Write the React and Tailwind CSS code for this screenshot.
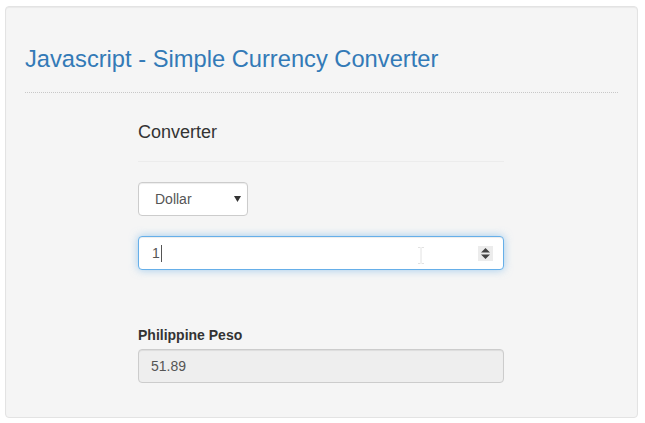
export default function App() {
  return (
    <div className="min-h-screen bg-white pt-[6px] font-['Liberation_Sans',Arial,sans-serif] text-[#333]">
      <div className="ml-[5px] w-[633px] rounded-[4px] border border-[#e3e3e3] bg-[#f5f5f5] px-[19px] pb-[34px] pt-[39px] shadow-[inset_0_1px_1px_rgba(0,0,0,0.05)]">
        <h3 className="text-[23.7px] leading-[26px] text-[#337ab7]">
          Javascript - Simple Currency Converter
        </h3>
        <div className="mt-[20px] border-t border-dotted border-[#c8c8c8]" />

        <div className="ml-[113px] w-[366px]">
          <div className="mt-[29px] text-[18px] leading-[20px]">Converter</div>
          <div className="mt-[19px] h-px bg-[#ececec]" />

          {/* currency select */}
          <div className="mt-[20px] flex h-[34px] w-[110px] items-center justify-between rounded-[4px] border border-[#ccc] bg-white pl-[16px] pr-[6px] text-[14px] text-[#555] shadow-[inset_0_1px_1px_rgba(0,0,0,0.075)]">
            <span>Dollar</span>
            <svg width="7" height="6" viewBox="0 0 7 6">
              <path d="M0 0h7L3.5 6z" fill="#333" />
            </svg>
          </div>

          {/* amount input (focused) */}
          <div className="relative mt-[20px] flex h-[34px] items-center rounded-[4px] border border-[#66afe9] bg-white pl-[13px] pr-[10px] text-[14px] text-[#555] shadow-[inset_0_1px_1px_rgba(0,0,0,0.075),0_0_8px_rgba(102,175,233,0.6)]">
            <span>1</span>
            <span className="ml-px h-[17px] w-px bg-[#555]" />
            <svg className="absolute left-[279px] top-[10px]" width="6" height="17" viewBox="0 0 6 17">
              <path d="M0 0.5h2.5M3.5 0.5h2.5M3 1v15M0 16.5h2.5M3.5 16.5h2.5" stroke="#e2e2e2" strokeWidth="1" fill="none" />
            </svg>
            <div className="ml-auto flex h-[15px] w-[15px] items-center justify-center bg-[#ececec]">
              <svg width="9" height="11" viewBox="0 0 9 11">
                <path d="M4.5 0L9 4.5H0z M0 6.5h9L4.5 11z" fill="#444" />
              </svg>
            </div>
          </div>

          <div className="mt-[55px] text-[14px] font-bold leading-[20px]">Philippine Peso</div>
          <div className="mt-[4px] flex h-[34px] items-center rounded-[4px] border border-[#ccc] bg-[#eee] px-[12px] text-[14px] text-[#555] shadow-[inset_0_1px_1px_rgba(0,0,0,0.075)]">
            51.89
          </div>
        </div>
      </div>
    </div>
  );
}
